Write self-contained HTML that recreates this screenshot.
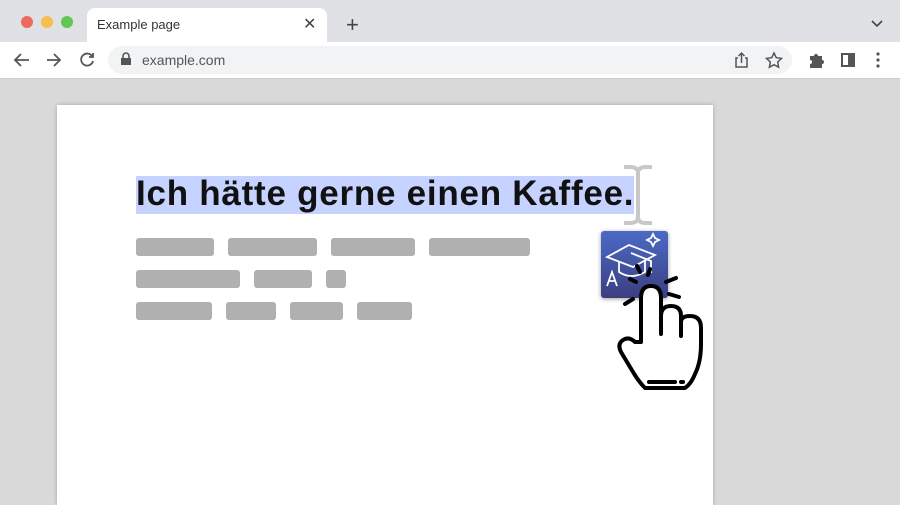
<!DOCTYPE html>
<html><head><style>
body{margin:0;width:900px;height:493px;overflow:hidden;background:#d9d9d9;font-family:"Liberation Sans",sans-serif;position:relative}
.top{position:absolute;left:0;top:0;width:900px;height:42px;background:#dfe1e5}
.dot{position:absolute;top:16px;width:12px;height:12px;border-radius:50%}
.tab{position:absolute;left:87px;top:8px;width:240px;height:34px;background:#fff;border-radius:8px 8px 0 0}
.bar{position:absolute;left:0;top:42px;width:900px;height:36px;background:#fff;border-bottom:1px solid #ccc}
.url{position:absolute;left:108px;top:46px;width:684px;height:28px;background:#f1f3f4;border-radius:14px}
.page{position:absolute;left:57px;top:105px;width:656px;height:400px;background:#fff;box-shadow:0 0 4px rgba(0,0,0,.25)}
.g{position:absolute;height:18px;background:#b0b0b0;border-radius:3px}
</style></head><body>
<div class="top"></div>
<div class="dot" style="left:21px;background:#ee6a5f"></div>
<div class="dot" style="left:41px;background:#f5be4f"></div>
<div class="dot" style="left:61px;background:#62c554"></div>
<div class="tab"><span style="position:absolute;left:10px;top:9px;font-size:13px;color:#333">Example page</span><span style="position:absolute;left:216px;top:6px;font-size:16px;color:#444">✕</span></div>
<div style="position:absolute;left:346px;top:12px;font-size:22px;color:#444">+</div>
<svg style="position:absolute;left:870px;top:19px" width="14" height="10"><path d="M2 2l5 5 5-5" stroke="#444" stroke-width="1.6" fill="none"/></svg>
<div class="bar"></div>
<svg style="position:absolute;left:0;top:42px" width="110" height="36"><g stroke="#555" stroke-width="1.8" fill="none"><path d="M29 18H16M21 12l-6 6 6 6"/><path d="M47 18h13M54 12l6 6-6 6"/><path d="M92 14a6 6 0 1 0 1 5"/><path d="M93 11v4h-4"/></g></svg>
<div class="url"></div>
<svg style="position:absolute;left:120px;top:52px" width="12" height="14"><rect x="1" y="6" width="10" height="7" fill="#555"/><path d="M3 6V4a3 3 0 0 1 6 0v2" stroke="#555" stroke-width="1.6" fill="none"/></svg>
<div style="position:absolute;left:142px;top:52px;font-size:14px;color:#555">example.com</div>
<svg style="position:absolute;left:730px;top:48px" width="170" height="26"><g stroke="#555" stroke-width="1.5" fill="none"><path d="M8 10H6v9h11v-9h-2M11.5 15V5M8.5 8l3-3 3 3"/><path d="M44 5l2.3 4.7 5.2.7-3.8 3.6.9 5.2-4.6-2.5-4.6 2.5.9-5.2-3.8-3.6 5.2-.7z"/></g>
<path d="M80 8h4a2 2 0 0 1 4 0h4v4a2 2 0 0 1 0 4v4h-12v-4a2 2 0 0 0 0-4z" fill="#555"/>
<rect x="112" y="6" width="12" height="12" stroke="#555" stroke-width="2" fill="none"/><rect x="118" y="6" width="6" height="12" fill="#555"/>
<circle cx="148" cy="6" r="1.6" fill="#555"/><circle cx="148" cy="12" r="1.6" fill="#555"/><circle cx="148" cy="18" r="1.6" fill="#555"/></svg>
<div class="page"></div>
<div style="position:absolute;left:136px;top:176px;width:498px;height:38px;background:#c6d2ff"></div>
<div style="position:absolute;left:136px;top:174px;width:540px;font-size:35px;font-weight:bold;color:#111;white-space:nowrap;letter-spacing:0.75px">Ich hätte gerne einen Kaffee.</div>
<svg style="position:absolute;left:620px;top:164px" width="36" height="62"><path d="M4 3h6q8 0 8 6v44q0 6 8 6h6M32 3h-6q-8 0-8 6M18 53q0 6-8 6H4" stroke="#c8c8c8" stroke-width="4" fill="none"/></svg>
<div class="g" style="left:136px;top:238px;width:78px"></div>
<div class="g" style="left:228px;top:238px;width:89px"></div>
<div class="g" style="left:331px;top:238px;width:84px"></div>
<div class="g" style="left:429px;top:238px;width:101px"></div>
<div class="g" style="left:136px;top:270px;width:104px"></div>
<div class="g" style="left:254px;top:270px;width:58px"></div>
<div class="g" style="left:326px;top:270px;width:20px"></div>
<div class="g" style="left:136px;top:302px;width:76px"></div>
<div class="g" style="left:226px;top:302px;width:50px"></div>
<div class="g" style="left:290px;top:302px;width:53px"></div>
<div class="g" style="left:357px;top:302px;width:55px"></div>
<div style="position:absolute;left:601px;top:231px;width:67px;height:67px;border-radius:3px;background:linear-gradient(#4b6ac6,#3b3f80);box-shadow:0 1px 4px rgba(0,0,0,.4)"></div>
<svg style="position:absolute;left:601px;top:231px" width="67" height="67"><g stroke="#fff" stroke-width="1.8" fill="none"><path d="M6 26l22-12 26 10-22 12z"/><path d="M18 31v10q12 8 26 0V29"/><path d="M30 22l20 8v12"/><path d="M52 3l2 4 4 2-4 2-2 4-2-4-4-2 4-2z"/><path d="M6 55l5-14 5 14M8 50h6"/></g></svg>
<svg style="position:absolute;left:613px;top:260px" width="100" height="135"><g stroke="#000" stroke-width="4" stroke-linecap="round" stroke-linejoin="round"><path fill="none" d="M24 6l3 6M37 9l-2 6M53 22l10-4M56 34l10 3M12 44l8-5M17 19l6 3"/><path fill="#fff" d="M28 82V38Q28 26 38 26Q48 26 48 38V56Q48 46 58 46Q68 46 68 56V62Q68 56 77 56Q88 56 88 68V84Q88 102 82 114Q78 124 72 128H32Q26 122 20 112L8 92Q4 84 10 80Q16 76 22 82Z"/><path fill="none" d="M48 56V74M68 62V76M36 122H62M68 122h2"/></g></svg>
</body></html>
